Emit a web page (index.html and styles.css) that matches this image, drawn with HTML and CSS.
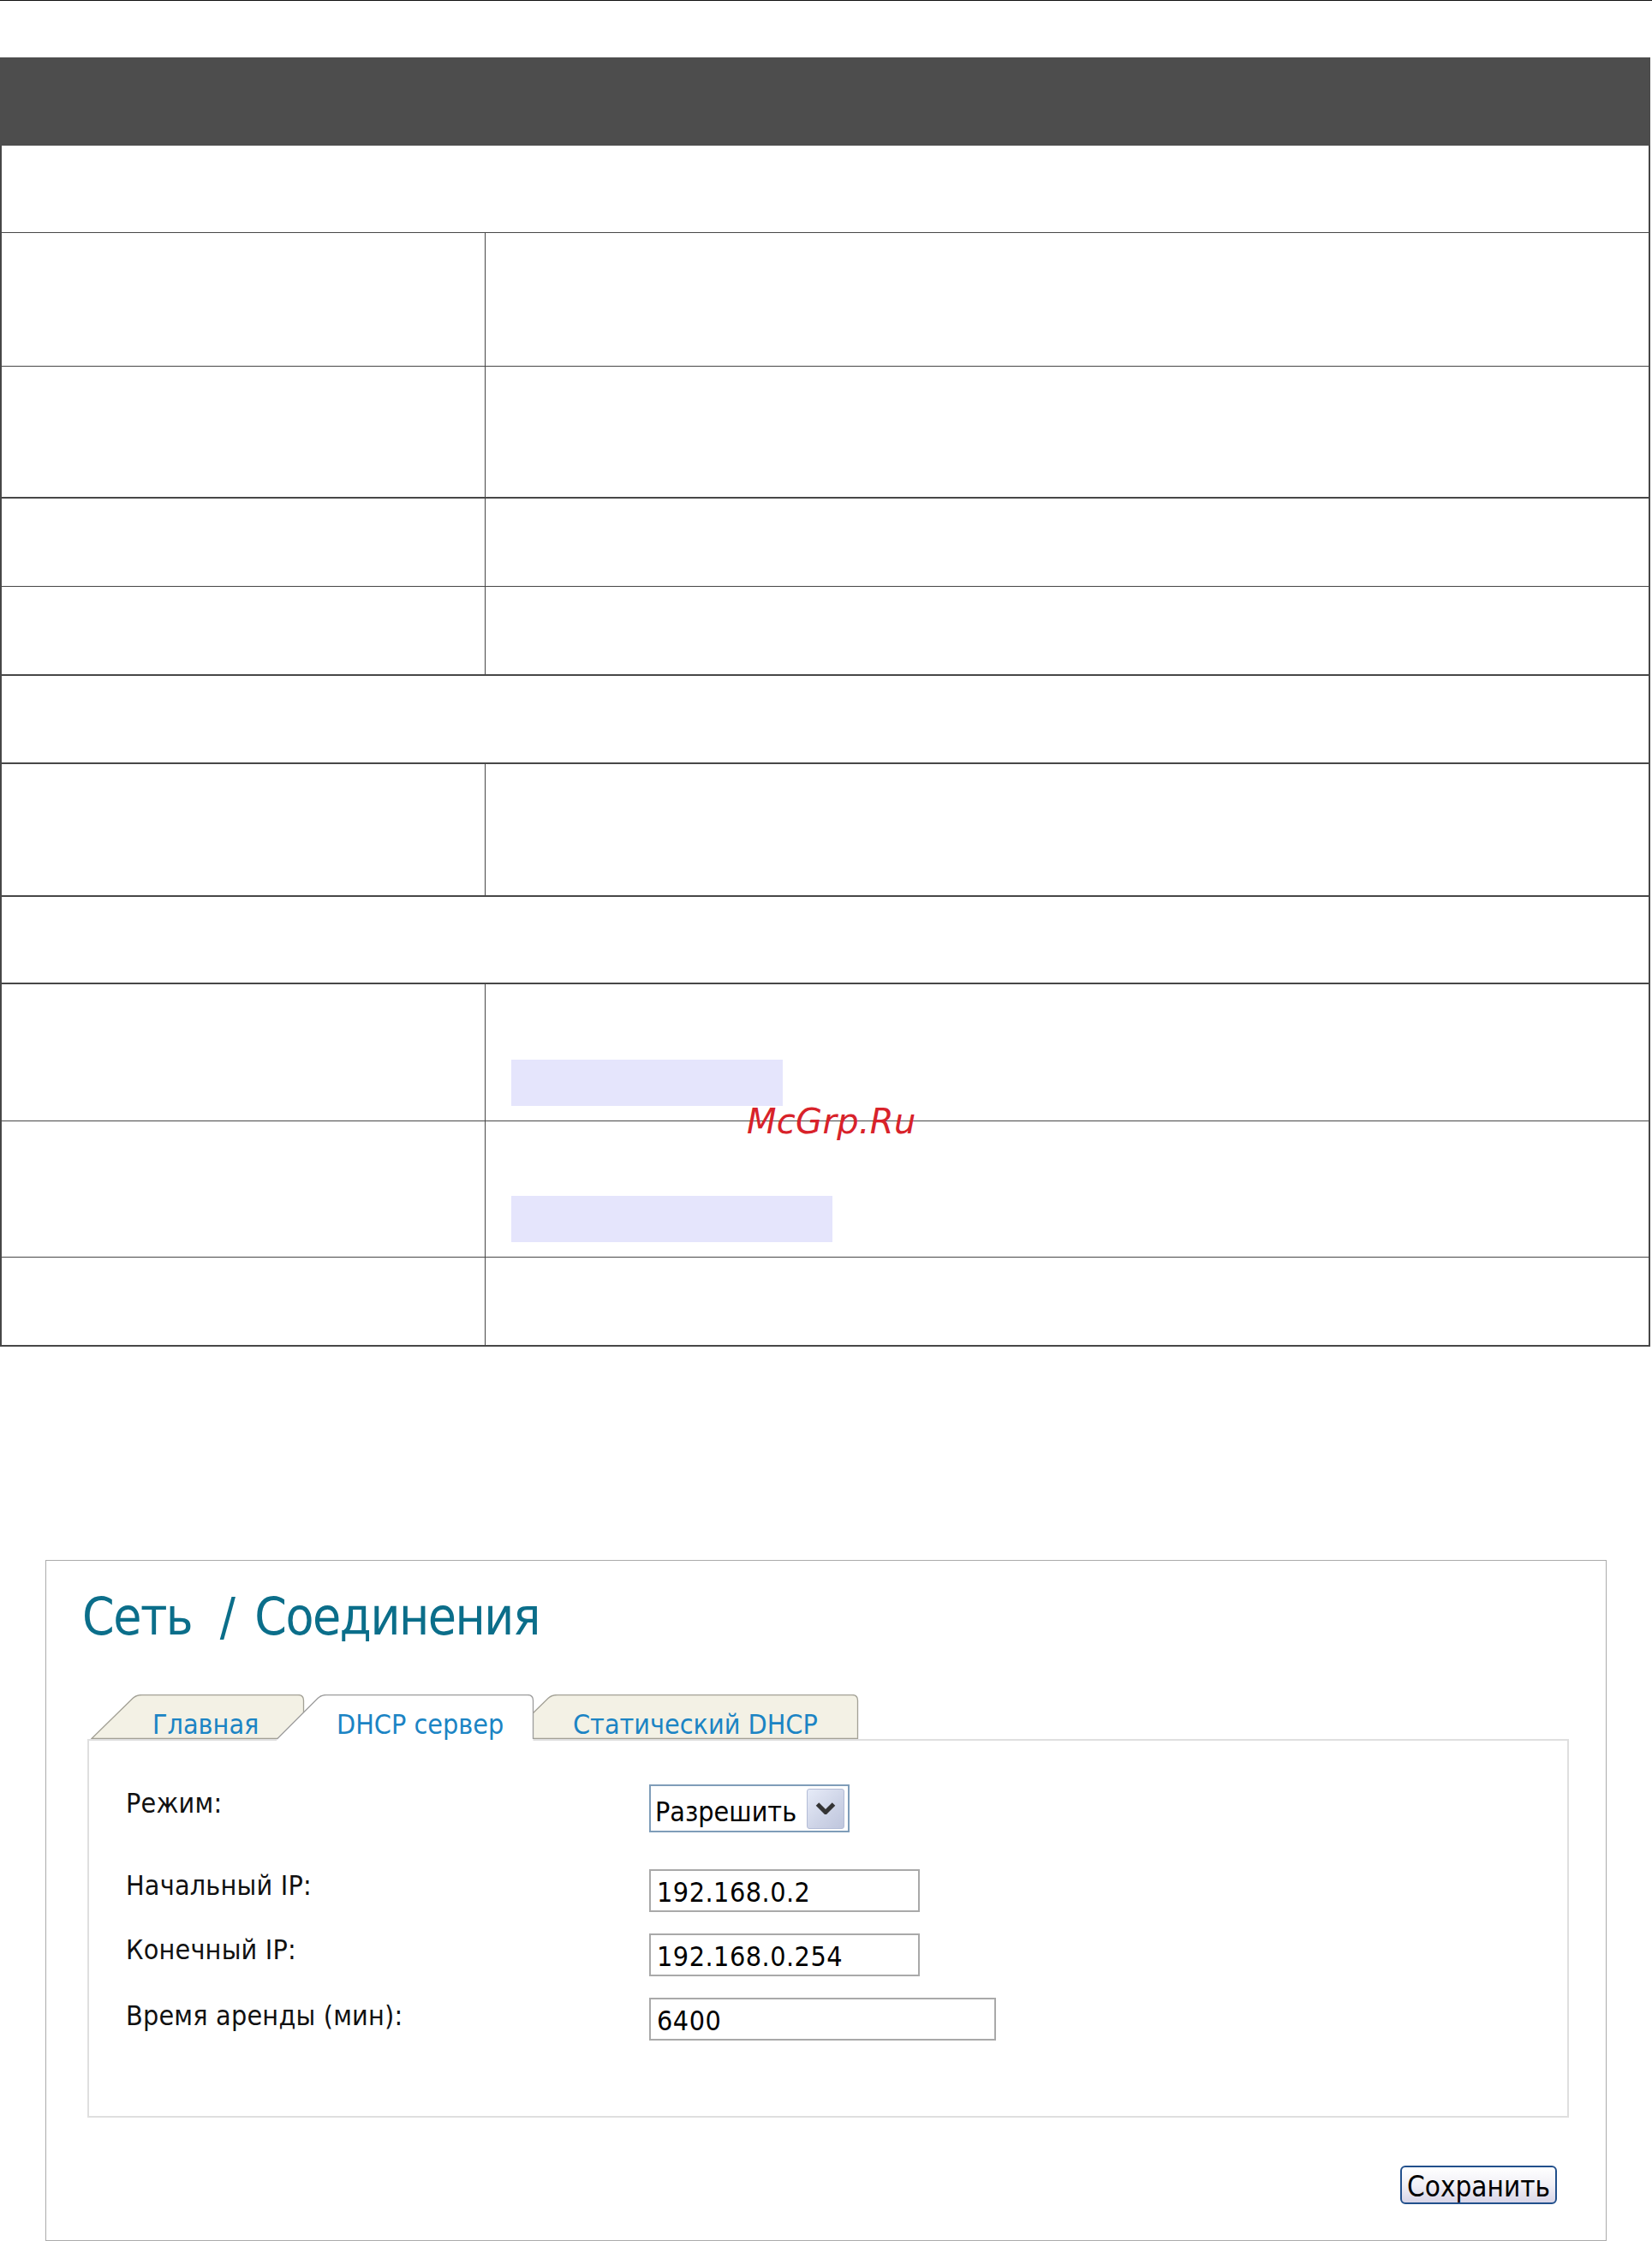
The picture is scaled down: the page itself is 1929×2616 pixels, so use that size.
FILE: index.html
```html
<!DOCTYPE html>
<html lang="ru">
<head>
<meta charset="utf-8">
<title>Сеть / Соединения — DHCP сервер</title>
<link rel="stylesheet" href="styles.css">
</head>
<body>
<div class="page-rule"></div>

<div class="doc-table">
  <div class="tbl-head"></div>
  <div class="tbl-body">
    <div class="row h102"></div>
    <div class="row split h156"><div class="cell-l"></div><div class="cell-r"></div></div>
    <div class="row split thick h154"><div class="cell-l"></div><div class="cell-r"></div></div>
    <div class="row split h103"><div class="cell-l"></div><div class="cell-r"></div></div>
    <div class="row split thick h104"><div class="cell-l"></div><div class="cell-r"></div></div>
    <div class="row thick h103"></div>
    <div class="row split thick h155"><div class="cell-l"></div><div class="cell-r"></div></div>
    <div class="row thick h102"></div>
    <div class="row split h160"><div class="cell-l"></div><div class="cell-r"><div class="hl hl-a"></div></div></div>
    <div class="row split h159"><div class="cell-l"></div><div class="cell-r"><div class="hl hl-b"></div></div></div>
    <div class="row split thick h104"><div class="cell-l"></div><div class="cell-r"></div></div>
    <span class="watermark">McGrp.Ru</span>
  </div>
</div>

<div class="ui-frame">
  <h1 class="ui-title">Сеть<span class="crumb-sep"> / </span>Соединения</h1>

  <div class="tabs">
    <div class="tab tab-main">
      <svg class="tab-shape" width="250" height="52" viewBox="0 0 250 52"><path d="M1,51.5 L49,4.5 Q53,0.5 60,0.5 L242,0.5 Q248.5,0.5 248.5,7 L248.5,51.5 Z" fill="#f3f1e5" stroke="#a3a196" stroke-width="1.3"/></svg>
      <span class="tab-label">Главная</span>
    </div>
    <div class="tab tab-dhcp">
      <svg class="tab-shape" width="301" height="54" viewBox="0 0 301 54"><path d="M0.5,52 L48,4.5 Q52,0.5 58,0.5 L293,0.5 Q299.5,0.5 299.5,7 L299.5,54 L0,54 Z" fill="#ffffff"/><path d="M0.5,52 L48,4.5 Q52,0.5 58,0.5 L293,0.5 Q299.5,0.5 299.5,7 L299.5,52" fill="none" stroke="#9c9c9c" stroke-width="1.3"/></svg>
      <span class="tab-label">DHCP сервер</span>
    </div>
    <div class="tab tab-static">
      <svg class="tab-shape" width="412" height="52" viewBox="0 0 412 52"><path d="M1,51.5 L49,4.5 Q53,0.5 60,0.5 L404,0.5 Q410.5,0.5 410.5,7 L410.5,51.5 Z" fill="#f3f1e5" stroke="#a3a196" stroke-width="1.3"/></svg>
      <span class="tab-label">Статический DHCP</span>
    </div>
  </div>

  <div class="panel">
    <div class="form-row row-mode">
      <span class="form-label lbl-mode">Режим:</span>
      <div class="select">
        <span class="select-text">Разрешить</span>
        <span class="select-btn"><svg width="24" height="14" viewBox="0 0 24 14"><path d="M2.5,2 L12,11.5 L21.5,2" fill="none" stroke="#343434" stroke-width="5"/></svg></span>
      </div>
    </div>
    <div class="form-row row-gap">
      <span class="form-label">Начальный IP:</span>
      <div class="input w316">192.168.0.2</div>
    </div>
    <div class="form-row row-gap">
      <span class="form-label">Конечный IP:</span>
      <div class="input w316">192.168.0.254</div>
    </div>
    <div class="form-row">
      <span class="form-label lbl-lease">Время аренды (мин):</span>
      <div class="input w405">6400</div>
    </div>
  </div>

  <div class="actions">
    <button class="btn" type="button">Сохранить</button>
  </div>
</div>
</body>
</html>
```

FILE: styles.css
```css
html, body {
  margin: 0;
  padding: 0;
  background: #ffffff;
  overflow: hidden;
}

body {
  font-family: "DejaVu Sans Condensed", "DejaVu Sans", sans-serif;
  color: #000;
}

.page-rule {
  height: 1px;
  background: #111;
}

/* ---------- document table ---------- */
.doc-table {
  margin-top: 66px;
  width: 1927px;
}

.tbl-head {
  height: 103px;
  background: #4d4d4d;
}

.tbl-body {
  position: relative;
  border-left: 2px solid #474747;
  border-right: 2px solid #474747;
}

.row {
  box-sizing: border-box;
  border-bottom: 1px solid #474747;
}

.row.thick {
  border-bottom-width: 2px;
}

.row.split {
  display: grid;
  grid-template-columns: 565px 1fr;
}

.cell-l {
  border-right: 1px solid #474747;
}

.cell-r {
  padding-left: 30px;
}

.h102 { height: 102px; }
.h103 { height: 103px; }
.h104 { height: 104px; }
.h154 { height: 154px; }
.h155 { height: 155px; }
.h156 { height: 156px; }
.h159 { height: 159px; }
.h160 { height: 160px; }

.hl {
  height: 54px;
  background: #e5e5fc;
}

.hl-a {
  width: 317px;
  margin-top: 88px;
}

.hl-b {
  width: 375px;
  margin-top: 87px;
}

.watermark {
  position: absolute;
  left: 870px;
  top: 1119px;
  font-family: "DejaVu Sans", sans-serif;
  font-style: oblique;
  font-size: 40px;
  line-height: 40px;
  letter-spacing: 0.3px;
  color: #d8222a;
  white-space: nowrap;
}

/* ---------- router UI screenshot ---------- */
.ui-frame {
  box-sizing: border-box;
  width: 1823px;
  height: 795px;
  margin: 249px 0 0 53px;
  padding-top: 34px;
  border: 1px solid #ababab;
}

.ui-title {
  margin: 0 0 0 42px;
  font-size: 60px;
  line-height: 62px;
  letter-spacing: -1.5px;
  font-weight: normal;
  color: #0b6e8a;
  white-space: nowrap;
}

.crumb-sep {
  margin: 0 8px 0 17px;
}

.tabs {
  position: relative;
  z-index: 2;
  display: flex;
  align-items: flex-start;
  height: 52px;
  margin: 60px 0 0 52px;
}

.tab {
  position: relative;
  box-sizing: border-box;
  height: 52px;
  padding-top: 19px;
  font-size: 32px;
  line-height: 32px;
  color: #1b84c4;
  white-space: nowrap;
}

.tab-shape {
  position: absolute;
  left: 0;
  top: 0;
}

.tab-label {
  position: relative;
}

.tab-main {
  z-index: 1;
  width: 250px;
  padding-left: 72px;
}

.tab-dhcp {
  z-index: 3;
  width: 301px;
  height: 54px;
  margin-left: -33px;
  padding-left: 70px;
}

.tab-static {
  z-index: 2;
  width: 412px;
  margin-left: -33px;
  padding-left: 78px;
}

.panel {
  position: relative;
  z-index: 1;
  box-sizing: border-box;
  width: 1730px;
  margin-left: 48px;
  padding: 51px 0 88px 43px;
  border: 2px solid #dfdfdf;
}

.form-row {
  display: flex;
  align-items: flex-start;
}

.row-mode {
  margin-bottom: 43px;
}

.row-gap {
  margin-bottom: 25px;
}

.form-label {
  flex: 0 0 611px;
  padding-top: 3px;
  font-size: 32px;
  line-height: 32px;
  letter-spacing: 0.2px;
  color: #111;
  white-space: nowrap;
}

.lbl-mode {
  padding-top: 6px;
}

.lbl-lease {
  padding-top: 5px;
}

.select {
  box-sizing: border-box;
  display: flex;
  align-items: center;
  justify-content: space-between;
  width: 234px;
  height: 56px;
  padding: 0 4px 0 5px;
  border: 2px solid #7f9db9;
  background: #fff;
  font-size: 32px;
}

.select-text {
  padding-top: 8px;
  line-height: 32px;
}

.select-btn {
  box-sizing: border-box;
  display: flex;
  align-items: center;
  justify-content: center;
  width: 44px;
  height: 47px;
  border: 1px solid #b3bcd6;
  border-radius: 3px;
  background: linear-gradient(135deg, #e6ebf8 0%, #cdd3e6 60%, #bfc6dd 100%);
}

.input {
  box-sizing: border-box;
  display: flex;
  align-items: center;
  height: 50px;
  padding: 4px 0 0 7px;
  border: 2px solid #a9a9a9;
  background: #fff;
  font-size: 32px;
  line-height: 32px;
  letter-spacing: 0.5px;
}

.w316 { width: 316px; }
.w405 { width: 405px; }

.actions {
  display: flex;
  justify-content: flex-end;
  margin-top: 56px;
  padding-right: 57px;
}

.btn {
  box-sizing: border-box;
  width: 183px;
  height: 45px;
  padding: 3px 0 0;
  border: 2px solid #22508c;
  border-radius: 6px;
  background: linear-gradient(#ffffff 0%, #f1f0f6 50%, #d8d5e7 100%);
  font-family: inherit;
  font-size: 33px;
  line-height: 33px;
  color: #000;
}
```
